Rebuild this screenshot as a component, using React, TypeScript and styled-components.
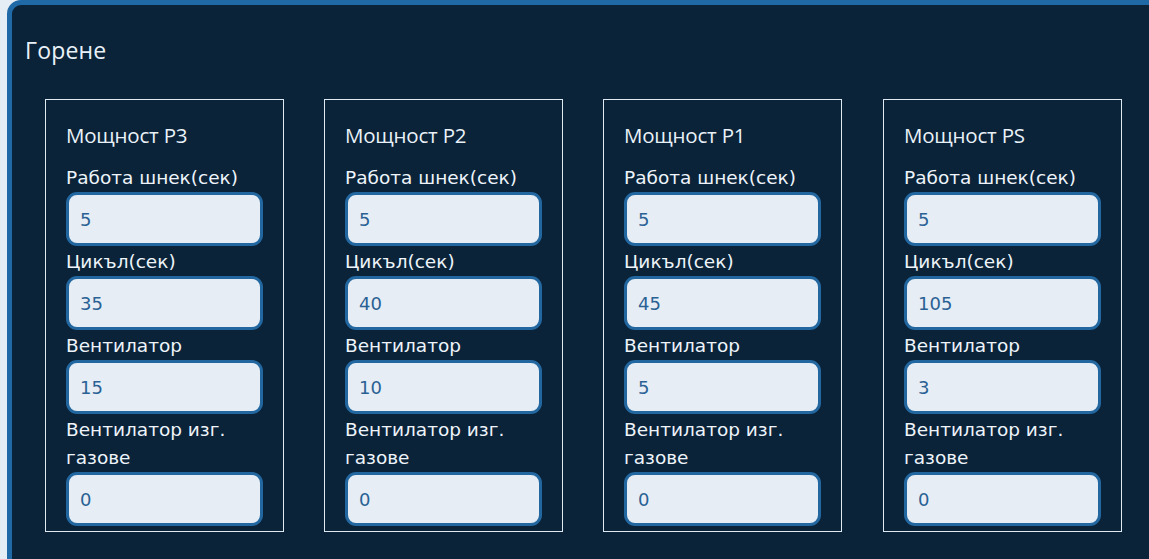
import React from "react";
import styled, { createGlobalStyle } from "styled-components";

const Global = createGlobalStyle`
  html, body {
    margin: 0;
    padding: 0;
    background: #e6eef5;
    overflow: hidden;
  }
`;

const Page = styled.div`
  width: 1149px;
  height: 559px;
  overflow: hidden;
  background: #e6eef5;
`;

const Panel = styled.section`
  margin-left: 7px;
  width: 1156px;
  min-height: 600px;
  box-sizing: border-box;
  background: #0a2339;
  border: 5px solid #1f69a6;
  border-radius: 14px;
  padding: 31px 0 0 13px;
  color: #e9f1f8;
`;

const PanelTitle = styled.h2`
  margin: 0;
  font-family: "Open Sans", "Noto Sans", sans-serif;
  font-weight: 400;
  font-size: 23px;
  line-height: 28px;
  letter-spacing: 0.2px;
`;

const CardRow = styled.div`
  display: flex;
  gap: 40px;
  margin: 35px 0 0 20px;
`;

const Card = styled.div`
  width: 239px;
  box-sizing: border-box;
  border: 1px solid #dfe9f2;
  padding: 21px 20px 5px 20px;
  display: flex;
  flex-direction: column;
  &:last-child {
    margin-left: 1px;
  }
`;

const CardTitle = styled.h3`
  margin: 0 0 13px 0;
  font-family: "Open Sans", "Noto Sans", sans-serif;
  font-weight: 400;
  font-size: 20.5px;
  line-height: 28px;
  letter-spacing: -0.2px;
`;

const Label = styled.label`
  display: block;
  padding-top: 2px;
  font-family: "DejaVu Sans", Verdana, sans-serif;
  font-size: 18.5px;
  line-height: 28px;
  color: #eef4fa;
  white-space: normal;
`;

const Input = styled.input`
  display: block;
  width: 100%;
  height: 54px;
  box-sizing: border-box;
  margin: 0;
  border: 3px solid #2367a0;
  border-radius: 11px;
  background: #e6edf4;
  padding: 0 11px;
  font-family: "DejaVu Sans", Verdana, sans-serif;
  font-size: 18px;
  color: #2a6194;
  outline: none;
`;

type Power = {
  title: string;
  auger: string;
  cycle: string;
  fan: string;
  exhaust: string;
};

const powers: Power[] = [
  { title: "Мощност Р3", auger: "5", cycle: "35", fan: "15", exhaust: "0" },
  { title: "Мощност Р2", auger: "5", cycle: "40", fan: "10", exhaust: "0" },
  { title: "Мощност Р1", auger: "5", cycle: "45", fan: "5", exhaust: "0" },
  { title: "Мощност PS", auger: "5", cycle: "105", fan: "3", exhaust: "0" },
];

const Field: React.FC<{ label: string; value: string }> = ({ label, value }) => (
  <>
    <Label>{label}</Label>
    <Input type="text" defaultValue={value} />
  </>
);

export default function App() {
  return (
    <Page>
      <Global />
      <Panel>
        <PanelTitle>Горене</PanelTitle>
        <CardRow>
          {powers.map((p) => (
            <Card key={p.title}>
              <CardTitle>{p.title}</CardTitle>
              <Field label="Работа шнек(сек)" value={p.auger} />
              <Field label="Цикъл(сек)" value={p.cycle} />
              <Field label="Вентилатор" value={p.fan} />
              <Field label="Вентилатор изг. газове" value={p.exhaust} />
            </Card>
          ))}
        </CardRow>
      </Panel>
    </Page>
  );
}
